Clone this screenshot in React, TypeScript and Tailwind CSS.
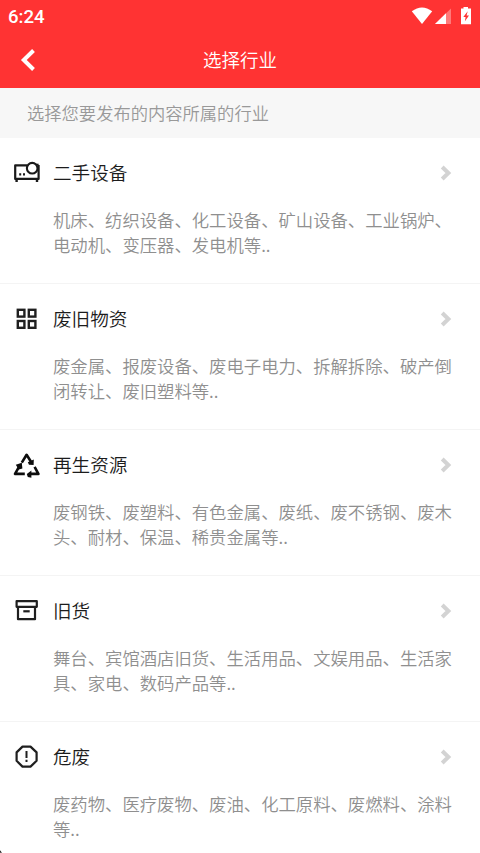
import React from 'react';

const DeviceIcon = () => (
  <svg viewBox="0 0 28 28" className="w-7 h-7" fill="none" stroke="#1a1a1a" strokeWidth="2.2">
    <path d="M14.5 6.3H2.2v13.6h23.4V6" strokeLinejoin="round" />
    <path d="M3.6 20v3M24 20v3" strokeWidth="2.4" />
    <path d="M22 5.5h3.6" strokeWidth="1.6" />
    <circle cx="19.2" cy="9.2" r="5.3" fill="#fff" strokeWidth="2.1" />
    <path d="M6.2 15.4h2M10 15.4h2" />
  </svg>
);

const GridIcon = () => (
  <svg viewBox="0 0 28 28" className="w-7 h-7" fill="none" stroke="#1f1f1f" strokeWidth="2.4">
    <rect x="4.8" y="4.8" width="6.6" height="6.8" />
    <rect x="15.8" y="4.8" width="6.6" height="6.8" />
    <rect x="4.8" y="16" width="6.6" height="6.8" />
    <rect x="15.8" y="16" width="6.6" height="6.8" />
  </svg>
);

const RecycleIcon = () => (
  <svg viewBox="0 0 28 28" className="w-7 h-7" fill="none" stroke="#0d0d0d" strokeWidth="2.6">
    <path d="M8.8 11.6L13.6 3.8L18 10.8" strokeLinejoin="round" />
    <path d="M6 15.8L2 22.9H11.8" strokeLinejoin="round" />
    <path d="M17.5 22.9H25.4L21.6 15.8" strokeLinejoin="round" />
    <path d="M14.8 11.2L20.8 8.4L20.6 14L16 13.8Z" fill="#0d0d0d" stroke="none" />
    <path d="M2.8 13.8L8.8 11.8L9.4 17.4L5.8 18.4Z" fill="#0d0d0d" stroke="none" />
    <path d="M13.8 23L18.4 19.4V26.8L14.8 26Z" fill="#0d0d0d" stroke="none" />
  </svg>
);

const BoxIcon = () => (
  <svg viewBox="0 0 28 28" className="w-7 h-7" fill="none" stroke="#1f1f1f" strokeWidth="2.2">
    <rect x="3.6" y="4.2" width="20.2" height="5.6" strokeLinejoin="round" />
    <path d="M5 10v12.2h17V10" strokeLinejoin="round" />
    <path d="M10.3 14.3h6.4" />
  </svg>
);

const WarningIcon = () => (
  <svg viewBox="0 0 28 28" className="w-7 h-7" fill="none" stroke="#1f1f1f" strokeWidth="2.2">
    <path d="M9.5 3.6h8L23.6 9.4v8.4L17.5 23.6h-8L3.6 17.8V9.4Z" strokeLinejoin="round" />
    <path d="M13.5 8v7M13.5 16.8v2.3" strokeWidth="2" />
  </svg>
);

const categories = [
  {
    name: '二手设备',
    icon: DeviceIcon,
    lines: ['机床、纺织设备、化工设备、矿山设备、工业锅炉、', '电动机、变压器、发电机等..'],
  },
  {
    name: '废旧物资',
    icon: GridIcon,
    lines: ['废金属、报废设备、废电子电力、拆解拆除、破产倒', '闭转让、废旧塑料等..'],
  },
  {
    name: '再生资源',
    icon: RecycleIcon,
    lines: ['废钢铁、废塑料、有色金属、废纸、废不锈钢、废木', '头、耐材、保温、稀贵金属等..'],
  },
  {
    name: '旧货',
    icon: BoxIcon,
    lines: ['舞台、宾馆酒店旧货、生活用品、文娱用品、生活家', '具、家电、数码产品等..'],
  },
  {
    name: '危废',
    icon: WarningIcon,
    lines: ['废药物、医疗废物、废油、化工原料、废燃料、涂料', '等..'],
  },
];

const StatusBar = () => (
  <div className="h-8 flex items-center justify-between pl-2 pr-2">
    <span className="font-['Roboto'] font-medium text-[18.6px] leading-8 pt-px">6:24</span>
    <div className="flex items-start h-[18px]">
      <svg viewBox="0 0 22 18" className="w-[22px] h-[18px]" fill="#fff">
        <path d="M0.8 4.3Q11 -3.3 21.2 4.3L11 17Z" />
      </svg>
      <svg viewBox="0 0 16 18" className="w-4 h-[18px] ml-[2px]" fill="#fff">
        <path d="M0 17L16 1.5V17Z" opacity="0.35" />
        <path d="M0 17L11 6.2V17Z" />
      </svg>
      <svg viewBox="0 0 12 18" className="w-3 h-[18px] ml-[9px]">
        <path d="M3.5 -0.5H8V1.5H11V17.2H1V1.5H3.5Z" fill="#fff" />
        <path d="M7.7 4.2L3.3 10H5.6L4.9 14.2L9 8.6H6.6Z" fill="#f33" />
      </svg>
    </div>
  </div>
);

const App: React.FC = () => {
  return (
    <div className="relative w-[480px] h-[853px] overflow-hidden bg-white font-['Noto_Sans_CJK_SC',sans-serif] font-[350]">
      <header className="h-[88px] bg-[#ff3333] text-white">
        <StatusBar />
        <div className="h-14 grid grid-cols-[1fr_auto_1fr] items-center">
          <svg viewBox="0 0 16 24" className="w-4 h-6 ml-5" fill="none" stroke="#fff" strokeWidth="4">
            <path d="M13.5 2.5L3.8 12L13.5 21.5" />
          </svg>
          <h1 className="text-[18.5px] font-[350]">选择行业</h1>
        </div>
      </header>

      <div className="h-[50px] bg-[#f7f7f7] px-[27px] flex items-center text-[17.3px] text-[#999]">
        选择您要发布的内容所属的行业
      </div>

      <main>
        {categories.map(({ name, icon: Icon, lines }) => (
          <section key={name} className="h-[146.1px] border-b border-[#f4f4f4]">
            <div className="h-[70px] flex items-center pl-[13px] pr-7">
              <Icon />
              <h2 className="ml-3 pb-0.5 flex-1 text-[18.6px] font-[350] text-[#1c1c1c]">{name}</h2>
              <svg viewBox="0 0 12 16" className="w-3 h-4" fill="none" stroke="#d3d3d3" strokeWidth="4">
                <path d="M2.2 2L8.4 8L2.2 14" />
              </svg>
            </div>
            <div className="-mt-[1.4px] pl-[53px] text-[17.35px] leading-[25.5px] text-[#8f8f8f] whitespace-nowrap">
              {lines.map((line) => (
                <p key={line}>{line}</p>
              ))}
            </div>
          </section>
        ))}
      </main>

      <svg viewBox="0 0 3 4" className="absolute bottom-0 left-0 w-[2px] h-[3px]" fill="#222">
        <path d="M0 0L3 4H0Z" />
      </svg>
    </div>
  );
};

export default App;
